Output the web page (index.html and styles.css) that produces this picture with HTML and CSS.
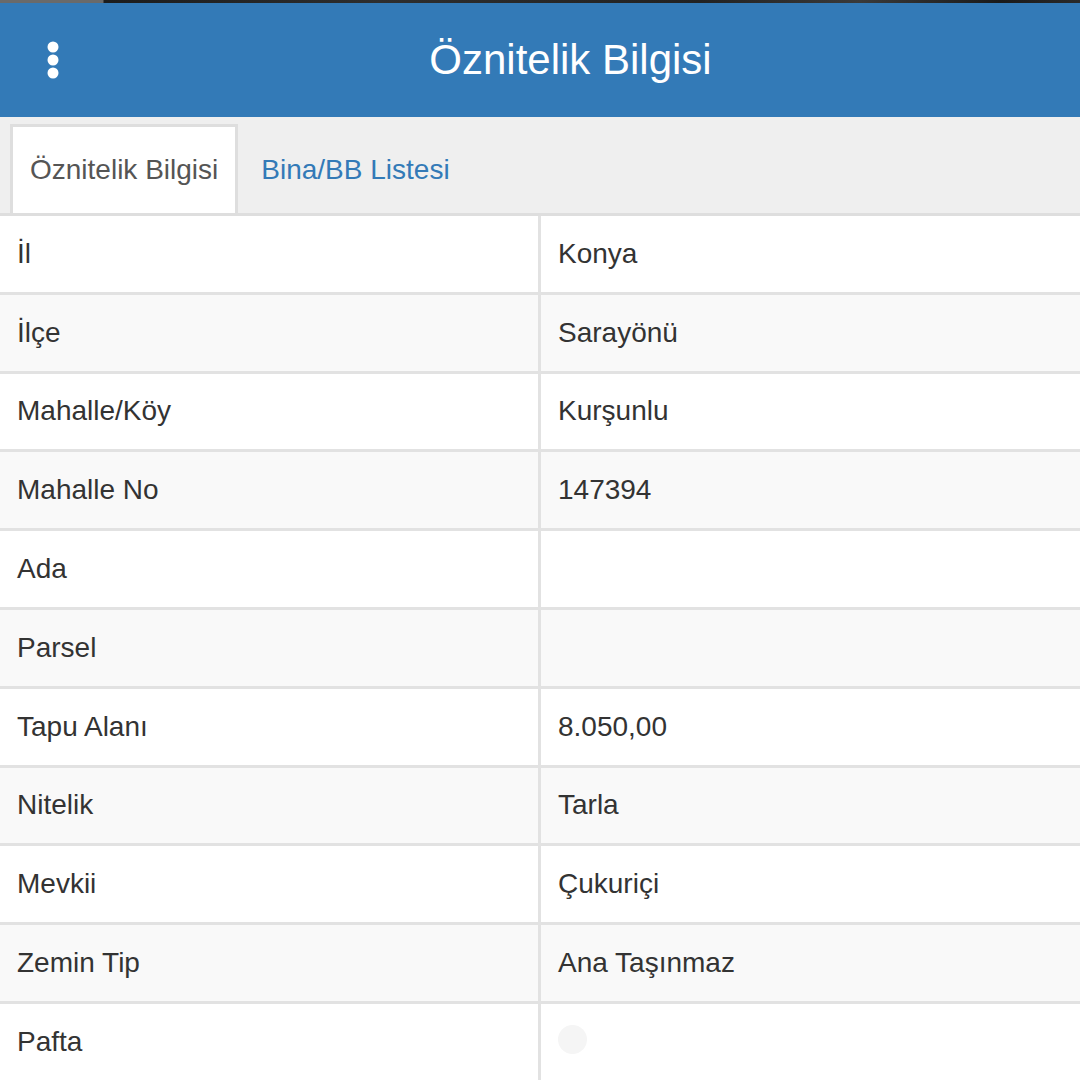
FILE: index.html
```html
<!DOCTYPE html>
<html lang="tr">
<head>
  <meta charset="utf-8">
  <title>Öznitelik Bilgisi</title>
  <link rel="stylesheet" href="styles.css">
</head>
<body>
  <!-- strip of the map that shows above the panel -->
  <div class="map-edge"></div>

  <div class="panel">
    <header class="panel-header">
      <button class="menu-btn" type="button" aria-label="Menü">
        <svg width="14" height="40" viewBox="0 0 14 40">
          <circle cx="7" cy="7" r="5.5" fill="#fff"/>
          <circle cx="7" cy="20" r="5.5" fill="#fff"/>
          <circle cx="7" cy="33" r="5.5" fill="#fff"/>
        </svg>
      </button>
      <h1 class="panel-title">Öznitelik Bilgisi</h1>
    </header>

    <ul class="tabs">
      <li class="tab active"><a href="#">Öznitelik Bilgisi</a></li>
      <li class="tab"><a href="#">Bina/BB Listesi</a></li>
    </ul>

    <div class="attr-table">
      <div class="attr-row"><div class="attr-key">İl</div><div class="attr-val">Konya</div></div>
      <div class="attr-row"><div class="attr-key">İlçe</div><div class="attr-val">Sarayönü</div></div>
      <div class="attr-row"><div class="attr-key">Mahalle/Köy</div><div class="attr-val">Kurşunlu</div></div>
      <div class="attr-row"><div class="attr-key">Mahalle No</div><div class="attr-val">147394</div></div>
      <div class="attr-row"><div class="attr-key">Ada</div><div class="attr-val"></div></div>
      <div class="attr-row"><div class="attr-key">Parsel</div><div class="attr-val"></div></div>
      <div class="attr-row"><div class="attr-key">Tapu Alanı</div><div class="attr-val">8.050,00</div></div>
      <div class="attr-row"><div class="attr-key">Nitelik</div><div class="attr-val">Tarla</div></div>
      <div class="attr-row"><div class="attr-key">Mevkii</div><div class="attr-val">Çukuriçi</div></div>
      <div class="attr-row"><div class="attr-key">Zemin Tip</div><div class="attr-val">Ana Taşınmaz</div></div>
      <div class="attr-row"><div class="attr-key">Pafta</div><div class="attr-val"><span class="loader"></span></div></div>
    </div>
  </div>
</body>
</html>
```

FILE: styles.css
```css
/* Base page */
html, body {
  margin: 0;
  padding: 0;
  height: 100%;
  overflow: hidden;
}

body {
  font-family: "Liberation Sans", Arial, sans-serif;
  font-size: 28px;
  color: #333;
  background: #fff;
}

/* Map behind the panel */
.map-edge {
  height: 3px;
  background: linear-gradient(to right, #6a6a6a 0, #6a6a6a 103px, #1c1c1c 104px, #2e2e2e 380px, #222 700px, #3a3a3a 860px, #1a1a1a 1000px, #2a2a2a 100%);
}

/* Panel header */
.panel-header {
  display: flex;
  align-items: center;
  height: 114px;
  background-color: #337ab7;
  color: #fff;
}

.menu-btn {
  display: flex;
  align-items: center;
  width: 61px;
  height: 100%;
  padding: 0 0 0 46px;
  border: none;
  background: none;
  cursor: pointer;
  box-sizing: border-box;
}

.panel-title {
  flex: 1;
  margin: 0;
  font-size: 42px;
  font-weight: normal;
  text-align: center;
}

/* Tabs */
.tabs {
  display: flex;
  list-style: none;
  margin: 0;
  padding: 7px 0 0 10px;
  height: 89px;
  box-sizing: content-box;
  background-color: #efefef;
  border-bottom: 3px solid #dedede;
}

.tab {
  display: flex;
  margin-right: 3px;
  border: 3px solid transparent;
  border-bottom: none;
}

.tab a {
  display: flex;
  align-items: center;
  padding: 0 17px;
  color: #337ab7;
  text-decoration: none;
}

.tab.active {
  background-color: #fff;
  border-color: #dedede;
}

.tab.active a {
  color: #555;
}

/* Attribute rows */
.attr-row {
  display: grid;
  grid-template-columns: 541px 1fr;
  height: 78.8px;
  border-bottom: 3px solid #e2e2e2;
  box-sizing: border-box;
}

.attr-row:nth-child(even) {
  background-color: #f9f9f9;
}

.attr-key,
.attr-val {
  display: flex;
  align-items: center;
  padding: 0 17px;
}

.attr-key {
  border-right: 3px solid #e2e2e2;
}

.loader {
  display: block;
  width: 29px;
  height: 29px;
  margin-top: -4px;
  border-radius: 50%;
  background-color: #f5f5f5;
}
```
